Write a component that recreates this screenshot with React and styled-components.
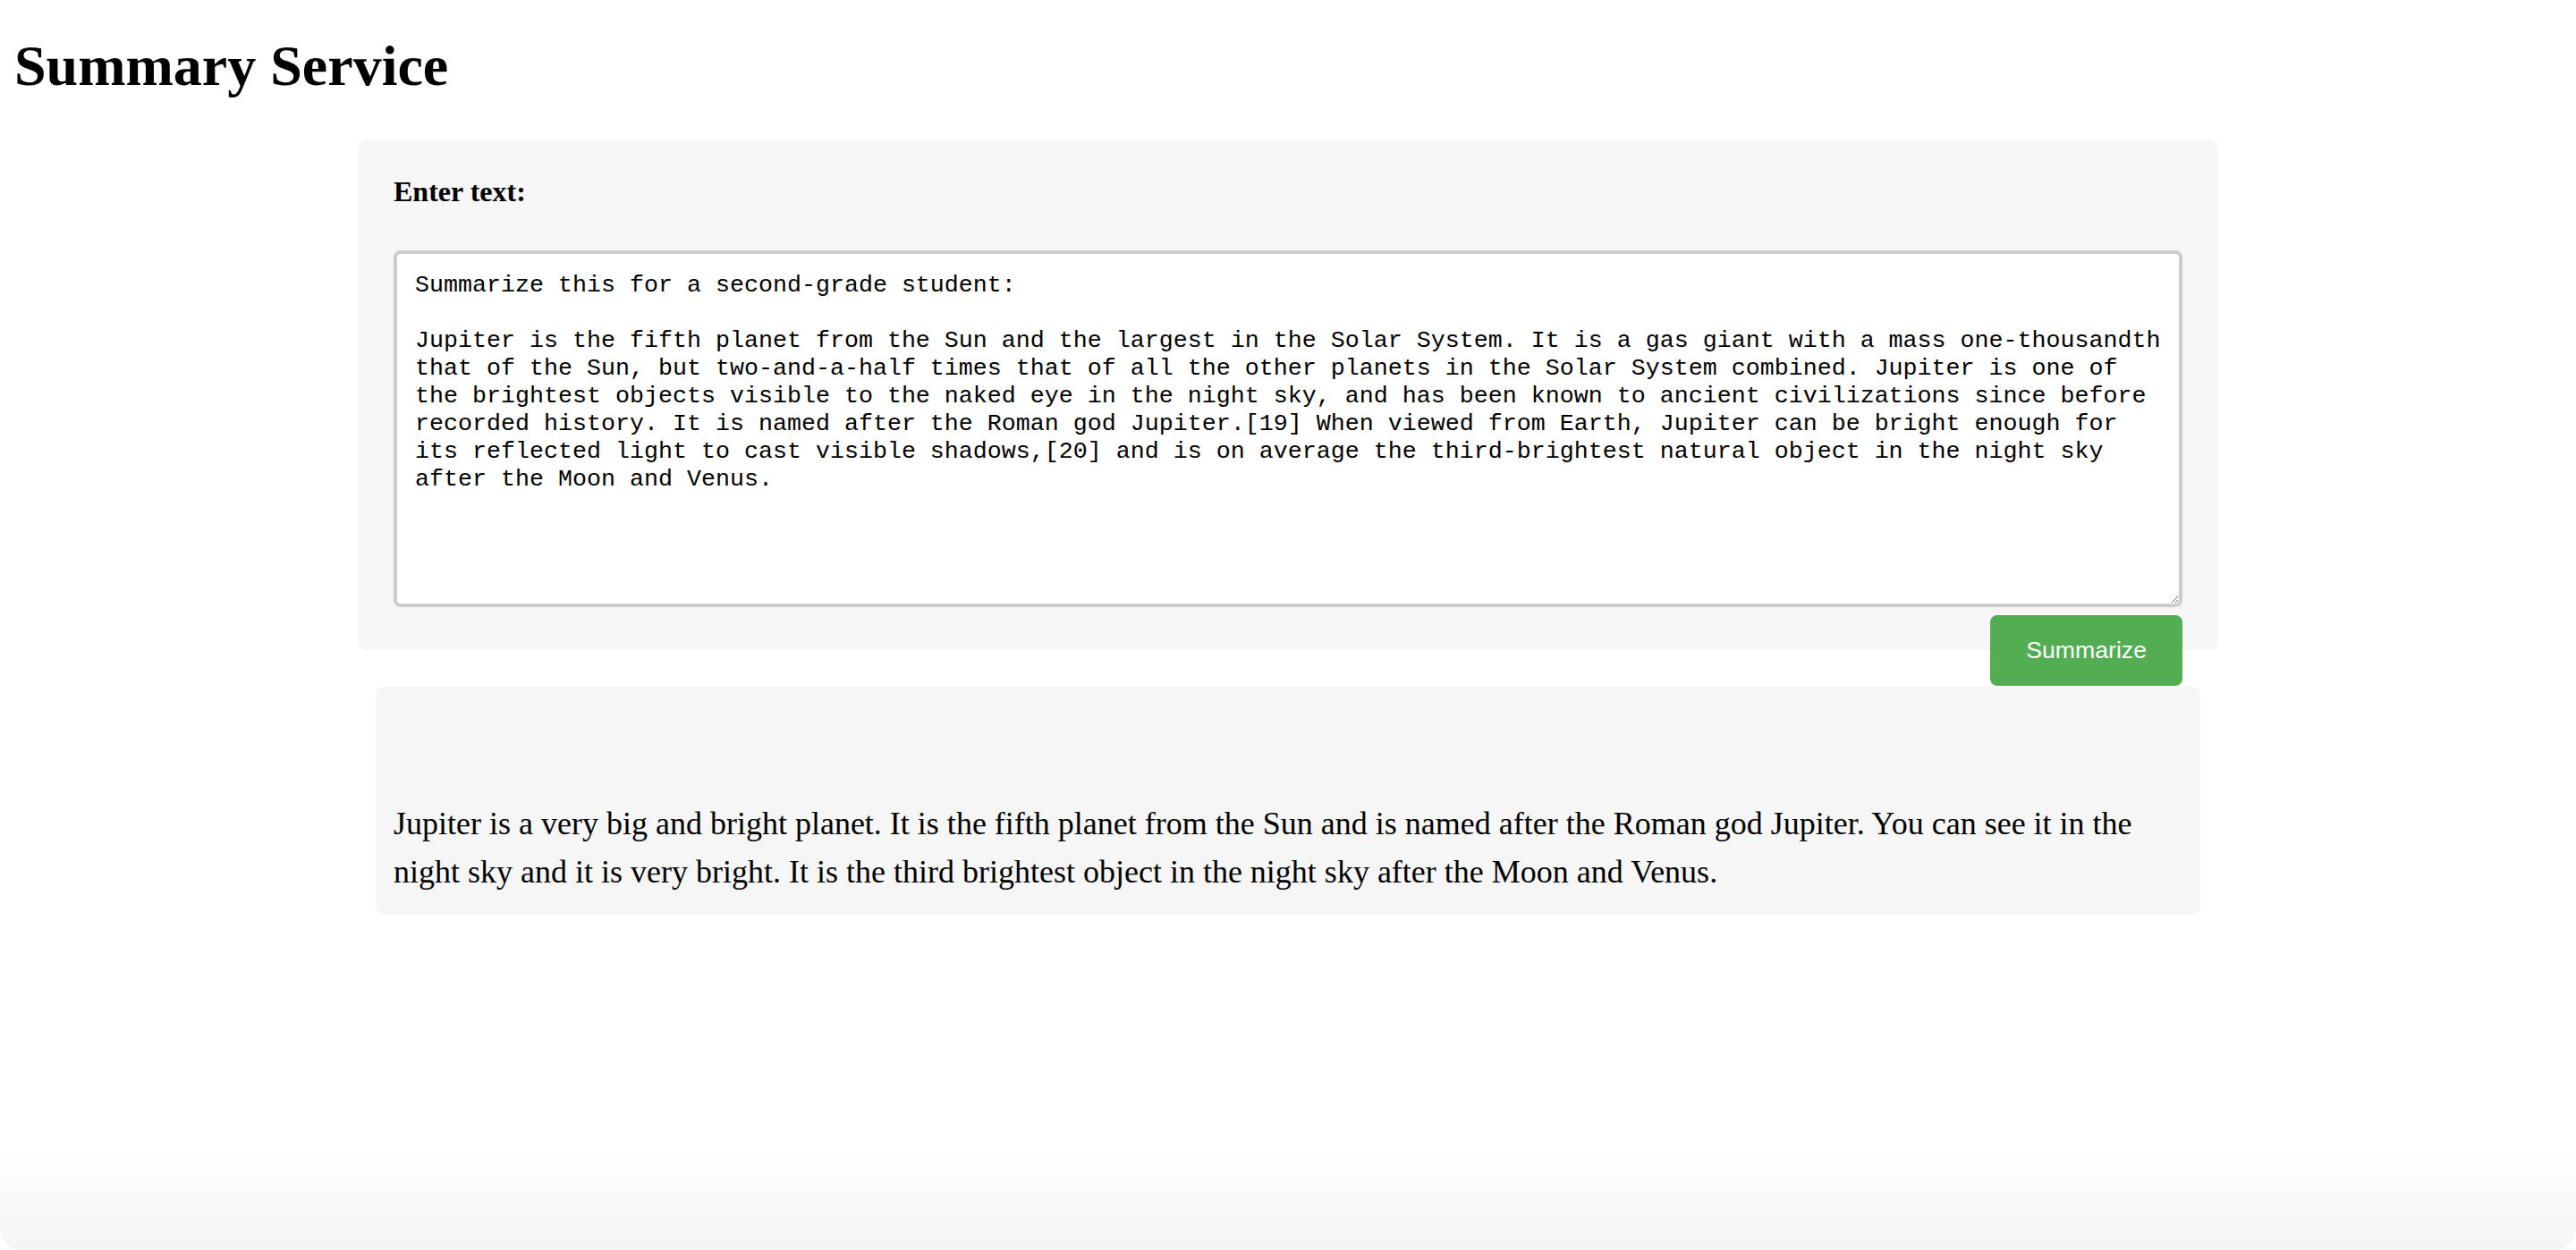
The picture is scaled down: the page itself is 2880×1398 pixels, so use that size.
import React from 'react'
import styled, { createGlobalStyle } from 'styled-components'

const GlobalStyle = createGlobalStyle`
  body {
    margin: 0 16px 16px;
    background: #fff;
    color: #000;
    font-family: "Liberation Serif", "Times New Roman", serif;
  }
`

const Title = styled.h1`
  font-size: 64px;
  font-weight: bold;
  margin: 37px 0 45px;
`

const Container = styled.div`
  width: 2080px;
  margin: 0 auto;
`

const Panel = styled.form`
  display: flex;
  flex-direction: column;
  background: #f6f6f6;
  border-radius: 10px;
  padding: 40px;
`

const Label = styled.label`
  display: block;
  font-size: 32px;
  font-weight: bold;
  margin-bottom: 47px;
`

const TextArea = styled.textarea`
  display: block;
  box-sizing: border-box;
  width: 100%;
  height: 399px;
  margin: 0 0 8px;
  padding: 20px 14px 20px 20px;
  border: 4px solid #ccc;
  border-radius: 8px;
  background: #fff;
  color: #000;
  font-family: "Liberation Mono", "Courier New", monospace;
  font-size: 26.67px;
  line-height: 31px;
  outline: none;
  resize: both;
`

const ButtonRow = styled.div`
  height: 0;
  display: flex;
  justify-content: flex-end;
  align-items: flex-start;
`

const Button = styled.button`
  margin-top: 1px;
  padding: 24px 40px;
  background: #53ae53;
  color: #fff;
  border: none;
  border-radius: 8px;
  font-family: "Liberation Sans", Arial, sans-serif;
  font-size: 26.67px;
  cursor: pointer;
`

const ResultBox = styled.div`
  margin: 41px 20px 0;
  padding: 126px 20px 21px;
  background: #f6f6f6;
  border-radius: 10px;
  font-size: 36px;
  line-height: 54px;
`

const BottomFade = styled.div`
  position: fixed;
  left: 0;
  right: 0;
  bottom: 0;
  height: 110px;
  pointer-events: none;
  background: linear-gradient(to bottom, rgba(0, 0, 0, 0), rgba(0, 0, 0, 0.045));
  border-bottom-left-radius: 24px;
  border-bottom-right-radius: 24px;
`

const promptText = `Summarize this for a second-grade student:

Jupiter is the fifth planet from the Sun and the largest in the Solar System. It is a gas giant with a mass one-thousandth that of the Sun, but two-and-a-half times that of all the other planets in the Solar System combined. Jupiter is one of the brightest objects visible to the naked eye in the night sky, and has been known to ancient civilizations since before recorded history. It is named after the Roman god Jupiter.[19] When viewed from Earth, Jupiter can be bright enough for its reflected light to cast visible shadows,[20] and is on average the third-brightest natural object in the night sky after the Moon and Venus.`

const summary =
  'Jupiter is a very big and bright planet. It is the fifth planet from the Sun and is named after the Roman god Jupiter. You can see it in the night sky and it is very bright. It is the third brightest object in the night sky after the Moon and Venus.'

const App = () => {
  return (
    <>
      <GlobalStyle />
      <Title>Summary Service</Title>
      <Container>
        <Panel onSubmit={(e) => e.preventDefault()}>
          <Label htmlFor="prompt">Enter text:</Label>
          <TextArea id="prompt" defaultValue={promptText} spellCheck={false} />
          <ButtonRow>
            <Button type="submit">Summarize</Button>
          </ButtonRow>
        </Panel>
        <ResultBox>{summary}</ResultBox>
      </Container>
      <BottomFade />
    </>
  )
}

export default App
